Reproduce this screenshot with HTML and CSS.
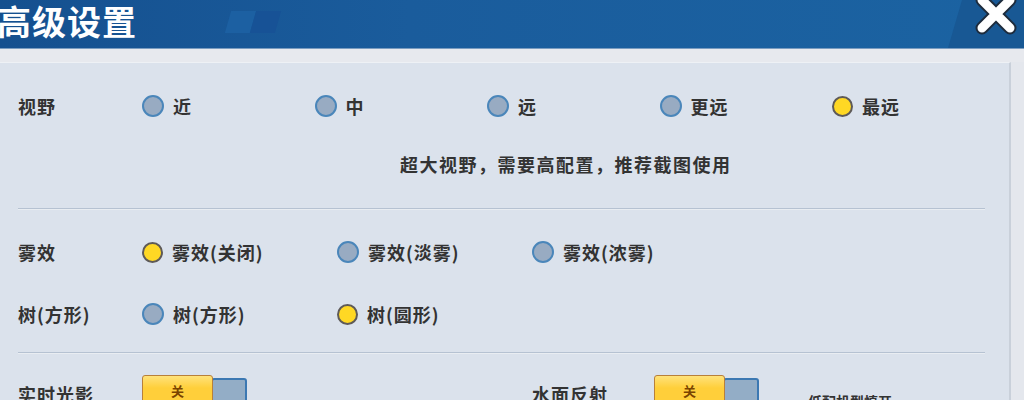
FILE: index.html
```html
<!DOCTYPE html>
<html lang="zh-CN">
<head>
    <meta charset="UTF-8">
    <meta name="viewport" content="width=device-width, initial-scale=1.0">
    <title>高级设置</title>
    <link rel="stylesheet" href="styles.css">
</head>
<body>
    <header class="topbar">
        <h1>高级设置</h1>
        <div class="deco">
            <span class="deco-a"></span>
            <span class="deco-b"></span>
        </div>
        <div class="corner">
            <svg class="close" width="46" height="42" viewBox="0 0 46 42">
                <g stroke-linecap="round">
                    <path d="M9 0 L37 28 M37 0 L9 28" stroke="#1d2b3c" stroke-width="13" />
                    <path d="M9 0 L37 28 M37 0 L9 28" stroke="#ffffff" stroke-width="9" />
                </g>
            </svg>
        </div>
    </header>
    <div class="strip"></div>
    <main class="panel">
        <div class="row">
            <div class="label">视野</div>
            <div class="options wide">
                <div class="option"><span class="radio"></span>近</div>
                <div class="option"><span class="radio"></span>中</div>
                <div class="option"><span class="radio"></span>远</div>
                <div class="option"><span class="radio"></span>更远</div>
                <div class="option"><span class="radio on"></span>最远</div>
            </div>
        </div>
        <p class="note">超大视野，需要高配置，推荐截图使用</p>
        <hr class="divider">
        <div class="row first">
            <div class="label">雾效</div>
            <div class="options">
                <div class="option"><span class="radio on"></span>雾效(关闭)</div>
                <div class="option"><span class="radio"></span>雾效(淡雾)</div>
                <div class="option"><span class="radio"></span>雾效(浓雾)</div>
            </div>
        </div>
        <div class="row second">
            <div class="label">树(方形)</div>
            <div class="options">
                <div class="option"><span class="radio"></span>树(方形)</div>
                <div class="option"><span class="radio on"></span>树(圆形)</div>
            </div>
        </div>
        <hr class="divider lower">
        <div class="row toggles">
            <div class="group">
                <div class="label">实时光影</div>
                <div class="toggle"><span class="knob">关</span><span class="track"></span></div>
            </div>
            <div class="group">
                <div class="label">水面反射</div>
                <div class="toggle"><span class="knob">关</span><span class="track"></span></div>
            </div>
            <div class="hint">低配机型慎开</div>
        </div>
    </main>
</body>
</html>
```

FILE: styles.css
```css
body {
    margin: 0;
    padding: 0;
    background-color: #e4e7ed;
    font-family: "Noto Sans CJK SC", "Noto Sans", sans-serif;
    color: #333;
    overflow: hidden;
    height: 400px;
}
.topbar {
    position: relative;
    height: 48px;
    background: linear-gradient(90deg, #15508f 0%, #1a5c9c 40%, #1b63a2 100%);
    border-bottom: 1px solid #7a9cc0;
    overflow: hidden;
}
.topbar h1 {
    margin: 0 0 0 -3px;
    font-size: 34px;
    line-height: 42px;
    font-weight: 700;
    color: #ffffff;
    letter-spacing: 1px;
}
.deco {
    position: absolute;
    left: 228px;
    top: 11px;
    display: flex;
}
.deco span {
    display: block;
    width: 25px;
    height: 22px;
    transform: skewX(-16deg);
}
.deco-a {
    background-color: #1c60a2;
}
.deco-b {
    background-color: #175296;
}
.corner {
    position: absolute;
    right: 0;
    top: 0;
    width: 76px;
    height: 48px;
    background-color: #185894;
    clip-path: polygon(14px 0, 100% 0, 100% 100%, 0 100%);
}
.close {
    position: absolute;
    right: 5px;
    top: 0;
}
.strip {
    height: 13px;
    background-color: #e7e9ee;
}
.panel {
    width: 1011px;
    height: 400px;
    box-sizing: border-box;
    background-color: #dbe2ec;
    border-top: 1px solid #eef1f5;
    border-right: 2px solid #c9d0da;
    padding: 24px 0 0 18px;
}
.row {
    display: flex;
    align-items: center;
    height: 38px;
}
.label {
    width: 124px;
    font-size: 18px;
    letter-spacing: 1px;
    font-weight: 700;
    color: #333;
}
.options {
    display: flex;
}
.option {
    display: flex;
    align-items: center;
    gap: 9px;
    width: 195px;
    font-size: 18px;
    letter-spacing: 1px;
    font-weight: 700;
    color: #333;
}
.options.wide .option {
    width: 172.5px;
}
.radio {
    display: block;
    width: 18px;
    height: 18px;
    border-radius: 50%;
    border: 2px solid #4a86ba;
    background-color: #98abc2;
}
.radio.on {
    border: 2.5px solid #5e5a58;
    width: 17px;
    height: 17px;
    background-color: #ffd824;
}
.note {
    margin: 27px 0 0 382px;
    font-size: 18px;
    letter-spacing: 1.5px;
    line-height: 24px;
    font-weight: 700;
    color: #333;
}
.divider {
    margin: 32px 0 0 0;
    width: 967px;
    border: none;
    border-top: 1px solid #b6c2d2;
    border-bottom: 1px solid #e9edf2;
}
.row.first {
    margin-top: 23px;
}
.row.second {
    margin-top: 24px;
}
.divider.lower {
    margin-top: 19px;
}
.toggles {
    margin-top: 21px;
    height: auto;
    align-items: flex-start;
}
.group {
    display: flex;
    width: 514px;
}
.group .label {
    padding-top: 6px;
}
.group + .group {
    width: 276px;
}
.group + .group .label {
    width: 122px;
}
.toggle {
    display: flex;
    align-items: flex-start;
}
.knob {
    display: block;
    width: 71px;
    height: 32px;
    box-sizing: border-box;
    border: 1px solid #b8803a;
    border-radius: 3px;
    background: linear-gradient(#ffe27a, #ffcf3a 40%);
    text-align: center;
    font-size: 13px;
    line-height: 30px;
    color: #7a4400;
    font-weight: 700;
    position: relative;
    z-index: 1;
}
.track {
    display: block;
    width: 36px;
    height: 30px;
    margin-top: 3px;
    margin-left: -2px;
    box-sizing: border-box;
    border: 2px solid #3c78b2;
    border-radius: 3px;
    background-color: #93adc6;
}
.hint {
    padding-top: 16px;
    font-size: 14px;
    font-weight: 700;
    color: #333;
}
```
